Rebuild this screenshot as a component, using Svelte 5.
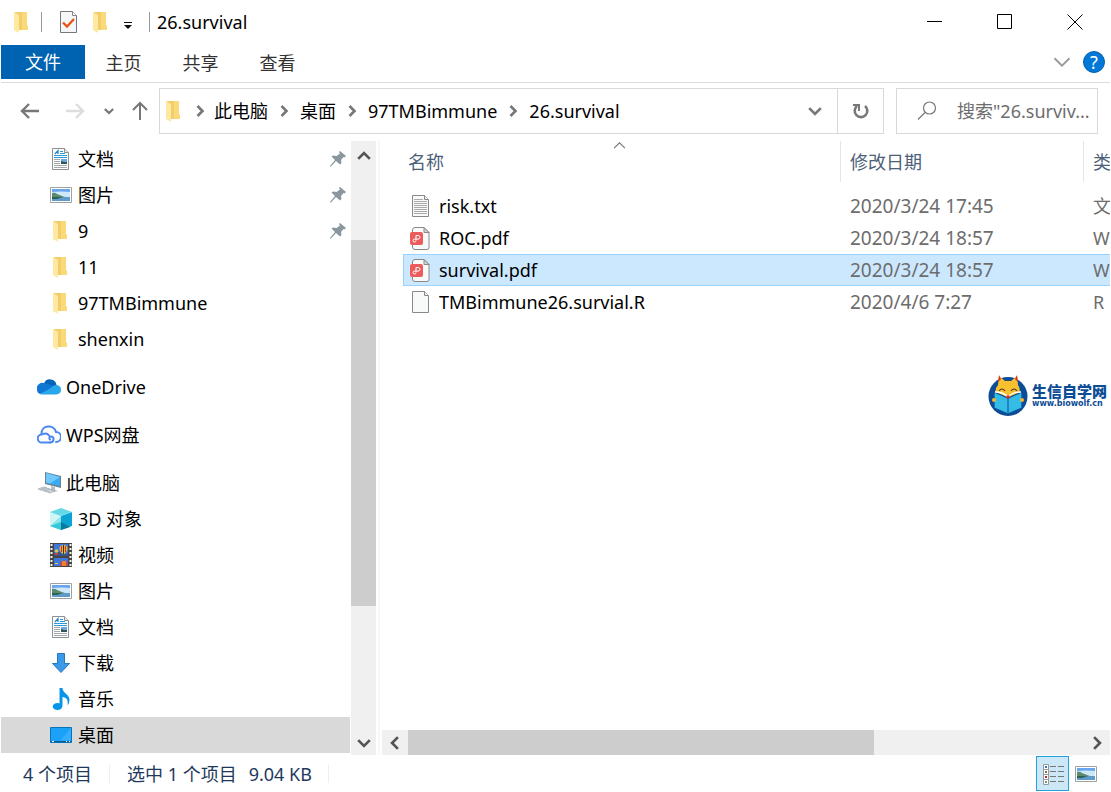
<script>
  const quick = [
    { icon: 'doc', label: '文档', pinned: true },
    { icon: 'picture', label: '图片', pinned: true },
    { icon: 'folder', label: '9', pinned: true },
    { icon: 'folder', label: '11' },
    { icon: 'folder', label: '97TMBimmune' },
    { icon: 'folder', label: 'shenxin' }
  ];
  const computer = [
    { icon: 'cube', label: '3D 对象' },
    { icon: 'video', label: '视频' },
    { icon: 'picture', label: '图片' },
    { icon: 'doc', label: '文档' },
    { icon: 'download', label: '下载' },
    { icon: 'music', label: '音乐' },
    { icon: 'desktop', label: '桌面', active: true }
  ];
  const groups = [
    { items: quick },
    { head: { icon: 'onedrive', label: 'OneDrive' }, items: [] },
    { head: { icon: 'wps', label: 'WPS网盘' }, items: [] },
    { head: { icon: 'pc', label: '此电脑' }, items: computer }
  ];
  const crumbs = ['此电脑', '桌面', '97TMBimmune', '26.survival'];
  const tabs = ['主页', '共享', '查看'];
  const files = [
    { icon: 'txt', name: 'risk.txt', date: '2020/3/24 17:45', type: '文' },
    { icon: 'pdf', name: 'ROC.pdf', date: '2020/3/24 18:57', type: 'W' },
    { icon: 'pdf', name: 'survival.pdf', date: '2020/3/24 18:57', type: 'W' },
    { icon: 'file', name: 'TMBimmune26.survial.R', date: '2020/4/6 7:27', type: 'R' }
  ];
  let selected = $state(2);
  let query = $state('');
</script>

{#snippet chevron(dir, size, weight, color)}
  <svg width={size} height={size} viewBox="0 0 12 12" fill="none" stroke={color} stroke-width={weight} aria-hidden="true">
    {#if dir === 'up'}<path d="M1 8.500 6 3.500l5 5" />
    {:else if dir === 'down'}<path d="M1 3.500l5 5 5-5" />
    {:else if dir === 'left'}<path d="M8.500 1l-5 5 5 5" />
    {:else}<path d="M3.500 1l5 5-5 5" />{/if}
  </svg>
{/snippet}

{#snippet icon(name)}
  <svg class="icon" width="24" height="24" viewBox="0 0 24 24" aria-hidden="true">
    {#if name === 'folder'}
      <path d="M5 2h12v13l1 1v4H8z" fill="#f9d978" />
      <path d="M5 2h7v18H9z" fill="#f3cd6c" />
      <path d="M4 2l5 3v18l-5-3z" fill="#ffe8a0" />
    {:else if name === 'doc'}
      <path d="M3.500 1.500h12l4 4v17h-16z" fill="#fdfdfd" stroke="#8d9194" />
      <path d="M15.500 1.500v4h4" fill="#e8ebec" stroke="#8d9194" />
      <path d="M5 8.500h13M5 10.500h13M11 4.500h3M11 6.500h5" stroke="#2a9bd8" />
      <path d="M6 7l3-3.500V7M7.500 5.500H9" stroke="#1b83c5" fill="none" stroke-width="1.200" />
      <path d="M5 12.500h6M5 14.500h6M5 16.500h6M5 18.500h13M5 20.500h13" stroke="#a3a8ab" />
      <path d="M12 12h6v5h-6z" fill="#6da5e0" /><path d="M12 14l3 1h3v2h-6z" fill="#2e554e" />
    {:else if name === 'picture'}
      <path d="M1.500 4.500h21v15h-21z" fill="#fff" stroke="#9da2a5" />
      <path d="M3 6h18v12H3z" fill="#6aa6ee" /><path d="M3 9q9-1 18 0v5H3z" fill="#cde8f9" />
      <path d="M3 10q3-1 5 1l5 2 3 1H3z" fill="#5b8a6c" />
      <path d="M3 14h18v4H3z" fill="#5f9ac8" /><path d="M3 14h11l-6 2H3z" fill="#2c6354" />
    {:else if name === 'onedrive'}
      <path d="M7 8.500a6.500 6.500 0 0 1 12.500 1.500l-6.500 4z" fill="#0364b8" />
      <path d="M0 14.500a5.500 5.500 0 0 1 8-6q3-.500 5 1l6 3.500-16 6q-3-1-3-4.500z" fill="#0f78d4" />
      <path d="M3 19l11-6q2-3 5.500-3 4.500.500 4.500 4.500 0 4.500-5 5H5q-1 0-2-.500z" fill="#28a8ea" />
    {:else if name === 'wps'}
      <g fill="none" stroke="#4a87f0" stroke-width="2" stroke-linecap="round">
        <path d="M13 19.500H5a4 4 0 0 1-.500-8C4 1.500 17 1 19 9a5 5 0 0 1 0 10" />
        <path d="M6 11q4-1.500 6 1.500M13 19.500c4 0 5-6 1-6-2 0-2 2-1 3" />
      </g>
    {:else if name === 'pc'}
      <path d="M8 1l16 4v12L8 13z" fill="#6d8190" /><path d="M9 2l14 4v9L9 12z" fill="#38abf4" />
      <path d="M9 2l14 4-10 6.500-4-1z" fill="#71c8fb" />
      <path d="M14 15l4 1v3l3 1-4 1-5-1 2-2z" fill="#b3bdc5" />
      <path d="M1 18l6-2 11 4-5 2z" fill="#d7dde1" stroke="#a1abb3" stroke-width=".7" />
      <path d="M4 17l9 4M7 16l9 4M3 19l6-2M7 20l6-2" stroke="#a2adb5" stroke-width=".7" />
    {:else if name === 'cube'}
      <path d="M1 5l11 4v14L1 19z" fill="#8de3e8" /><path d="M1 5l11 4-11 10z" fill="#cff5f4" />
      <path d="M12 9l11-4v14l-11 4z" fill="#0aa3d4" /><path d="M12 15l9 5-9 3z" fill="#087c9a" />
      <path d="M1 5l11-4 11 4-11 4z" fill="#65d9e5" /><path d="M1 19l11-4v8z" fill="#35c8d9" />
    {:else if name === 'video'}
      <path d="M1 0h22v24H1z" fill="#454545" />
      <path d="M2.500 1v23M21.500 1v23" stroke="#f1f1f1" stroke-width="2" stroke-dasharray="2 2" />
      <path d="M5 1h14v12H5zM5 15h14v8H5z" fill="#3f78dc" />
      <path d="M5 10q4-2 7 0t7 0v3H5z" fill="#38538b" />
      <path d="M10.500 6a4 4 0 0 1 8 0q0 2-3 5h-2q-3-3-3-5z" fill="#efbd2c" />
      <path d="M12.500 3v6M16.500 3v6" stroke="#c93a2b" stroke-width="1.200" /><path d="M14.500 2v9" stroke="#3b302b" />
      <circle cx="7.500" cy="8" r="1.800" fill="#e3c43f" /><path d="M6 10h3v2H6z" fill="#c5473a" />
      <path d="M11.500 21a3.500 3.500 0 0 1 7 0v2h-7z" fill="#df3f2d" />
      <path d="M14 18v5M16 18v5M6 20.500h3" stroke="#f2c53d" />
    {:else if name === 'download'}
      <path d="M8.500 2.500h7v10h5L12 21.500l-8.500-9h5z" fill="#3c99e8" stroke="#2379bd" />
    {:else if name === 'music'}
      <path d="M10.500 1h3c0 5 7 6 7 12q0 3-2 5.500c1-6-1-8-5-8.500v9h-3z" fill="#0895e9" />
      <ellipse cx="8.500" cy="19.500" rx="4.800" ry="3.500" fill="#0895e9" />
    {:else if name === 'desktop'}
      <path d="M1.500 4.500h21v15h-21z" fill="#1ba1f8" stroke="#0874b7" />
      <path d="M22 5v12L11 18z" fill="#35adff" /><path d="M2 18.500h20" stroke="#075b93" />
      <path d="M3 18.500h2M17 18.500h1M20 18.500h1" stroke="#fff" />
    {:else if name === 'check'}
      <path d="M3.500 1.500h12l4 4v17h-16z" fill="#f5f6f7" stroke="#777" /><path d="M15.500 1.500v4h4" fill="#fff" stroke="#888" />
      <path d="M6 12.500l4 4 7-7.500" fill="none" stroke="#e85416" stroke-width="2.300" />
    {:else if name === 'pdf'}
      <path d="M4.500 4q0-2.500 2.500-2.500h9l5 5v15q0 2-2 2H7q-2.500 0-2.500-2.500z" fill="#f8f9f9" stroke="#898989" />
      <path d="M16 1.500v5h5z" fill="#d5d5d5" stroke="#898989" />
      <rect x="2" y="6" width="13" height="13" rx="2" fill="#ed5c5c" />
      <path d="M8 14V9.500h2q2 0 2 1.800t-2 1.800H6.500q-1.500 0-1.500 1.400t1.500 1.500 1.500-1.500" fill="none" stroke="#fff" />
    {:else}
      <path d="M4.500 1.500h12l4 4v17h-16z" fill="#f8f9f9" stroke="#898989" />
      <path d="M16.500 1.500v4h4" fill="#eee" stroke="#898989" />
      {#if name === 'txt'}
        <path d="M6 5.500h9M6 7.500h13M6 9.500h13M6 11.500h13M6 13.500h13M6 15.500h13M6 17.500h13M6 19.500h13" stroke="#aaa" />
      {/if}
    {/if}
  </svg>
{/snippet}

<div class="window">
  <header class="titlebar">
    <div class="quickbar">
      {@render icon('folder')}
      <span class="bar"></span>
      <button aria-label="属性">{@render icon('check')}</button>
      <button aria-label="新建文件夹">{@render icon('folder')}</button>
      <button class="more" aria-label="自定义">
        <svg width="10" height="10" viewBox="0 0 10 10" aria-hidden="true"><path d="M1 1.500h8" stroke="#111" /><path d="M1 4h8L5 8z" fill="#111" /></svg>
      </button>
      <span class="bar last"></span>
    </div>
    <h1>26.survival</h1>
    <div class="controls">
      <button aria-label="最小化"><svg width="16" height="16" viewBox="0 0 16 16"><path d="M0 7.500h15" stroke="#000" /></svg></button>
      <button aria-label="最大化"><svg width="16" height="16" viewBox="0 0 16 16"><path d="M.5 .5h14v14H.5z" fill="none" stroke="#000" /></svg></button>
      <button aria-label="关闭"><svg width="16" height="16" viewBox="0 0 16 16"><path d="M.5 .5l15 15M15.500 .5l-15 15" stroke="#000" /></svg></button>
    </div>
  </header>

  <nav class="ribbon">
    <button class="file-tab">文件</button>
    {#each tabs as tab}<button class="tab">{tab}</button>{/each}
    <span class="grow"></span>
    <button aria-label="展开功能区">{@render chevron('down', 18, 1.2, '#999')}</button>
    <button class="help" aria-label="帮助">?</button>
  </nav>

  <div class="toolbar">
    <div class="history">
      <button aria-label="后退"><svg width="20" height="18" viewBox="0 0 20 18" fill="none" stroke="#777" stroke-width="2.400"><path d="M19 9H2M9 2L2 9l7 7" /></svg></button>
      <button aria-label="前进"><svg width="20" height="18" viewBox="0 0 20 18" fill="none" stroke="#ddd" stroke-width="2.400"><path d="M1 9h17M11 2l7 7-7 7" /></svg></button>
      <button class="recent" aria-label="最近位置">{@render chevron('down', 10, 2.6, '#777')}</button>
      <button aria-label="上移"><svg width="16" height="20" viewBox="0 0 16 20" fill="none" stroke="#777" stroke-width="2"><path d="M8 19V2M1 9l7-7 7 7" /></svg></button>
    </div>
    <div class="address">
      {@render icon('folder')}
      {#each crumbs as crumb}
        <span class="sep">{@render chevron('right', 12, 2.6, '#777')}</span>
        <a href="#top">{crumb}</a>
      {/each}
      <span class="grow"></span>
      <button class="drop" aria-label="历史">{@render chevron('down', 14, 2.3, '#777')}</button>
      <button class="refresh" aria-label="刷新">
        <svg width="18" height="18" viewBox="0 0 18 18" fill="none" stroke="#777" stroke-width="2.600"><path d="M5 4a6.300 6.300 0 1 0 8 0" /><path d="M1 3h6v6" stroke-width="2" /></svg>
      </button>
    </div>
    <label class="search">
      <svg width="20" height="20" viewBox="0 0 20 20" fill="none" stroke="#777" stroke-width="1.200" aria-hidden="true"><circle cx="12.500" cy="7" r="6" /><path d="M8 11.500L1 18.500" /></svg>
      <input bind:value={query} placeholder={'搜索"26.surviv...'} aria-label="搜索" />
    </label>
  </div>

  <div class="body">
    <nav class="tree">
      {#each groups as group}
        <div class="group">
          {#if group.head}<a class="node head" href="#top">{@render icon(group.head.icon)}{group.head.label}</a>{/if}
          {#each group.items as item}
            <a class="node" class:active={item.active} href="#top">
              {@render icon(item.icon)}{item.label}
              {#if item.pinned}
                <svg class="pin" width="16" height="16" viewBox="0 0 16 16" aria-hidden="true">
                  <path d="M10 0l6 5-1.500 1.500-1-.5-2.500 3 .5 3L10 13.500l-4-3.500-5 5.500H0V15l5-6-3.500-3.500L3 4.500l3.500.5L10 2.500 9 1z" fill="#8b979f" />
                </svg>
              {/if}
            </a>
          {/each}
        </div>
      {/each}
    </nav>
    <div class="vscroll">
      <button aria-label="向上滚动">{@render chevron('up', 14, 2.3, '#555')}</button>
      <div class="track"><span class="before"></span><span class="thumb"></span><span class="after"></span></div>
      <button class="end" aria-label="向下滚动">{@render chevron('down', 14, 2.3, '#555')}</button>
    </div>
    <main>
      <div class="listing">
        <table>
          <thead>
            <tr>
              <th class="name">名称<span class="sort">{@render chevron('up', 13, 1, '#777')}</span></th>
              <th class="date">修改日期</th>
              <th class="type">类</th>
            </tr>
          </thead>
          <tbody>
            {#each files as file, i}
              <tr class:selected={selected === i} onclick={() => (selected = i)}>
                <td class="name"><span class="file">{@render icon(file.icon)}{file.name}</span></td>
                <td class="when">{file.date}</td>
                <td>{file.type}</td>
              </tr>
            {/each}
          </tbody>
        </table>
      </div>
      <div class="hscroll">
        <button aria-label="向左滚动">{@render chevron('left', 14, 2.3, '#555')}</button>
        <div class="track"><span class="thumb"></span><span class="after"></span></div>
        <button aria-label="向右滚动">{@render chevron('right', 14, 2.3, '#555')}</button>
      </div>
      <div class="brand">
        <svg width="40" height="42" viewBox="0 0 40 42" aria-hidden="true">
          <circle cx="20" cy="21.500" r="19.500" fill="#0c4d96" />
          <path d="M11 1l6 5h6l6-5 1 9q3 4 1 12l-6 6H14l-6-6q-2-8 2-12z" fill="#f8c12f" />
          <path d="M11 0l2 4-3 3zM29 0l-2 4 3 3z" fill="#d92d2b" />
          <path d="M11 16q3-4 6 0M23 16q3-4 6 0" fill="none" stroke="#59351d" stroke-width="1.200" />
          <path d="M6 17l14 6 14-6v16l-14 6-14-6z" fill="#35bce6" stroke="#0c4d96" stroke-width="1.200" />
          <path d="M7 17q9 0 13 5 4-5 13-5" fill="none" stroke="#fff" stroke-width="1.300" />
          <path d="M20 23v15" stroke="#0c4d96" />
          <circle cx="20" cy="22" r="1.800" fill="#d92d2b" />
          <circle cx="6" cy="25" r="2" fill="#f8b52c" /><circle cx="34" cy="25" r="2" fill="#f8b52c" />
        </svg>
        <div><strong>生信自学网</strong><small>www.biowolf.cn</small></div>
      </div>
    </main>
  </div>

  <footer>
    <span class="count">4 个项目</span>
    <span class="chosen">选中 1 个项目<span class="size">9.04 KB</span></span>
    <span class="grow"></span>
    <button class="view on" aria-label="详细信息">
      <svg width="24" height="24" viewBox="0 0 24 24" aria-hidden="true">
        <path d="M2.500 2.500h5v5h-5zM2.500 7.500h5v5h-5zM2.500 12.500h5v5h-5zM2.500 17.500h5v5h-5z" fill="#fff" stroke="#999" />
        <path d="M4 4h2v2H4z" fill="#3276bd" /><path d="M4 9h2v2H4z" fill="#807735" /><path d="M4 14h2v2H4z" fill="#b92f26" /><path d="M4 19h2v2H4z" fill="#6fa17b" />
        <path d="M9 4.500h6M17 4.500h6M9 9.500h6M17 9.500h6M9 14.500h6M17 14.500h6M9 19.500h6M17 19.500h6" stroke="#777" />
      </svg>
    </button>
    <button class="view" aria-label="大缩略图">{@render icon('picture')}</button>
  </footer>
</div>

<style>
  :global(body) { margin: 0; background: #fff; }
  .window {
    min-height: 100vh;
    display: flex;
    flex-direction: column;
    box-sizing: border-box;
    padding: 0 1px;
    font: 18px/24px "Noto Sans", "Noto Sans CJK SC", sans-serif;
    color: #000;
    overflow: hidden;
  }
  .window * { box-sizing: border-box; }
  button { border: 0; padding: 0; background: none; font: inherit; color: inherit; display: flex; align-items: center; justify-content: center; }
  a { color: inherit; text-decoration: none; }
  svg { display: block; flex: none; }
  .grow { flex: 1; }

  .titlebar { display: flex; align-items: center; height: 45px; padding-bottom: 1px; }
  .quickbar { display: flex; align-items: center; padding-left: 9px; }
  .bar { width: 1px; height: 20px; background: #999; margin: 0 7px; }
  .bar.last { margin: 0 7px 0 6px; }
  .quickbar button { margin-left: 8px; }
  .quickbar .more { width: 10px; height: 18px; align-items: end; margin: 0 10px; }
  h1 { margin: 0; font: inherit; }
  .controls { display: flex; margin-left: auto; }
  .controls button { width: 70px; height: 44px; }

  .ribbon { display: flex; align-items: center; height: 38px; border-bottom: 1px solid #dadbdc; padding-bottom: 3px; color: #333; }
  .file-tab { width: 84px; height: 34px; background: #0063b1; color: #fff; }
  .tab { width: 77px; height: 34px; padding-top: 2px; }
  .help { width: 22px; height: 22px; margin: 0 5px 0 12px; border-radius: 50%; background: #0078d7; border: 1px solid #0062b1; color: #fff; }

  .toolbar { display: flex; height: 58px; padding: 5px 12px 7px 0; }
  .history { display: flex; width: 158px; align-items: center; padding-left: 19px; gap: 25px; }
  .history .recent { margin: 0 -7px 0 -6px; }
  .address { flex: 1; display: flex; align-items: center; border: 1px solid #d9d9d9; min-width: 0; padding-left: 2px; }
  .address .sep { width: 32px; display: flex; justify-content: center; }
  .address .icon + .sep { width: 28px; }
  .drop { width: 44px; height: 100%; }
  .refresh { width: 46px; height: 100%; border-left: 1px solid #d9d9d9; }
  .search { display: flex; align-items: center; gap: 20px; width: 202px; margin-left: 12px; padding-left: 20px; border: 1px solid #d9d9d9; }
  .search input { min-width: 0; flex: 1; border: 0; padding: 0; outline: 0; background: none; font: inherit; }
  .search input::placeholder { color: #6d6d6d; opacity: 1; }

  .body { display: flex; flex: 1; }
  .tree { width: 349px; }
  .group + .group { margin-top: 12px; }
  .node { display: flex; align-items: center; height: 36px; padding: 0 4px 0 48px; gap: 5px; }
  .node.head { padding-left: 36px; }
  .node.active { background: #d9d9d9; }
  .pin { margin-left: auto; }
  .vscroll { display: flex; flex-direction: column; width: 25px; background: #f0f0f0; margin-left: 1px; }
  .vscroll button { height: 30px; }
  .vscroll .end { height: 24px; }
  .track { flex: 1; display: flex; }
  .vscroll .track { flex-direction: column; }
  .thumb { background: #cdcdcd; }
  .vscroll .before { flex: 69; }
  .vscroll .thumb { flex: 366; }
  .vscroll .after { flex: 125; }

  main { position: relative; flex: 1; min-width: 0; display: flex; flex-direction: column; margin-left: 2px; border-left: 2px solid #f7f7f7; padding-left: 2px; }
  .listing { flex: 1; padding-left: 21px; overflow: hidden; }
  table { width: 100%; table-layout: fixed; border-collapse: separate; border-spacing: 0; }
  th { position: relative; height: 41px; padding: 0 0 0 9px; text-align: left; font-weight: 400; color: #4c607a; border-right: 1px solid #e5e5e5; }
  th.name { padding-left: 5px; }
  th.date { width: 243px; }
  th.type { width: 26px; border: 0; }
  .sort { position: absolute; top: -2px; left: 50%; margin-left: -9px; }
  tbody::before { content: ""; display: block; height: 8px; }
  td { height: 32px; padding: 0 0 0 9px; color: #6d6d6d; border: solid transparent; border-width: 1px 0; white-space: nowrap; overflow: hidden; text-overflow: clip; }
  td.name { padding-left: 4px; color: #000; border-left-width: 1px; }
  td.when { font-size: 19px; }
  .file { display: flex; align-items: center; gap: 7px; }
  .selected td { background: #cce8ff; border-color: #99d1ff; }
  .hscroll { display: flex; height: 25px; background: #f0f0f0; }
  .hscroll button { width: 26px; }
  .hscroll .thumb { flex: 466; }
  .hscroll .after { flex: 210; }
  .brand { position: absolute; top: 234px; right: 3px; display: flex; align-items: center; gap: 4px; color: #0c4d96; }
  .brand strong { display: block; font-size: 15px; line-height: 16px; font-weight: 900; }
  .brand small { display: block; font: 700 8px/10px "DejaVu Sans", sans-serif; }

  footer { display: flex; align-items: center; height: 37px; color: #1e395b; padding: 0 8px 0 22px; }
  .count, .chosen { border-right: 1px solid #eee; line-height: 18px; }
  .count { padding-right: 17px; margin-right: 17px; }
  .chosen { padding-right: 16px; }
  .size { margin-left: 12px; }
  .view { width: 33px; height: 35px; }
  .view.on { background: #cce8f6; border: 1px solid #26a0da; }
</style>
